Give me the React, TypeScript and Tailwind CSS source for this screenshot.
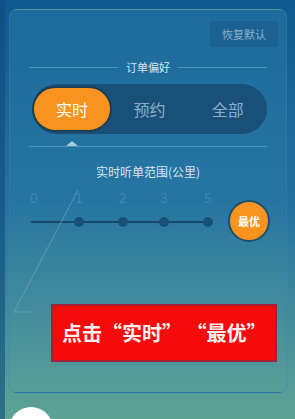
import React from "react";

const ticks = [
  { label: "0", x: 3, dot: false },
  { label: "1", x: 48, dot: true },
  { label: "2", x: 92, dot: true },
  { label: "3", x: 133, dot: true },
  { label: "5", x: 177, dot: true },
];

export default function App() {
  return (
    <div
      className="relative w-[295px] h-[419px] overflow-hidden bg-gradient-to-b from-[#0f5a8e] via-[#2572a0] to-[#5fa394] pl-[9px] pr-[8px] pt-[9px]"
      style={{ fontFamily: '"Noto Sans CJK SC", "Noto Sans", sans-serif' }}
    >
      <div className="absolute left-0 top-0 h-full w-[5px] bg-[#0b4f7e]/60" />

      <div className="flex h-[384px] flex-col rounded-[8px] border border-[#3d86b0]/40 bg-gradient-to-b from-[#1d6b9d] via-[#2675a1] to-[#589e97]">
        {/* reset button */}
        <div className="mt-[11px] mr-[8px] flex justify-end">
          <div className="flex h-[26px] w-[68px] items-center justify-center rounded-[2px] bg-[#1b6191] text-[11px] text-[#8db2cc]">
            恢复默认
          </div>
        </div>

        {/* order preference */}
        <div className="mt-[14px] flex items-center px-[19px]">
          <div className="h-px flex-1 bg-[#4f93bb]" />
          <span className="px-[8px] text-[11px] leading-[12px] text-[#d3e5f1]">订单偏好</span>
          <div className="h-px flex-1 bg-[#4f93bb]" />
        </div>

        <div className="ml-[22px] mr-[19px] mt-[11px] grid h-[50px] grid-cols-3 items-center rounded-full bg-[#19507a]">
          <div className="flex h-[46px] w-[80px] items-center justify-center rounded-full border-2 border-[#1c3f55] bg-[#f7931e] text-[16px] text-white">
            实时
          </div>
          <div className="text-center text-[16px] text-[#8aaec8]">预约</div>
          <div className="text-center text-[16px] text-[#8aaec8]">全部</div>
        </div>

        <div className="relative mt-[7px] px-[19px]">
          <div className="ml-[37px] h-0 w-0 border-x-[6px] border-b-[5px] border-x-transparent border-b-[#a9cbe0]" />
          <div className="h-px bg-[#4f93bb]" />
        </div>

        {/* range */}
        <div className="mt-[17px] text-center text-[12px] leading-[16px] text-[#d6e7f2]">
          实时听单范围(公里)
        </div>

        <div className="relative ml-[21px] mt-[8px] h-[60px] w-[240px]">
          {ticks.map((t) => (
            <span
              key={t.label}
              className="absolute top-0 -translate-x-1/2 text-[14px] leading-[18px] text-[#3f86b2]"
              style={{ left: t.x }}
            >
              {t.label}
            </span>
          ))}
          <div className="absolute left-0 top-[33px] h-[2px] w-[177px] bg-[#17486e]" />
          {ticks
            .filter((t) => t.dot)
            .map((t) => (
              <span
                key={t.label}
                className="absolute top-[29px] h-[10px] w-[10px] -translate-x-1/2 rounded-full bg-[#19507a]"
                style={{ left: t.x }}
              />
            ))}
          <div className="absolute left-[197px] top-[12px] flex h-[42px] w-[42px] items-center justify-center rounded-full border-2 border-[#1d4f70] bg-[#f7931e] text-[11px] font-bold text-white">
            最优
          </div>
        </div>

        {/* callout */}
        <div className="ml-[41px] mt-[56px] flex h-[58px] w-[226px] items-center border-2 border-[#a2223a] bg-[#f70a0a] pl-[9px] text-[20px] font-bold text-[#fdf0f0]">
          点击“实时” “最优”
        </div>
      </div>

      {/* annotation stroke */}
      <svg className="pointer-events-none absolute left-0 top-0" width="295" height="419">
        <polyline points="78,190 14,312 31,312" fill="none" stroke="#7eaecb" strokeOpacity="0.55" strokeWidth="1" />
      </svg>

      <div className="absolute left-[9px] top-[407px] h-[44px] w-[44px] rounded-full bg-white" />
    </div>
  );
}
